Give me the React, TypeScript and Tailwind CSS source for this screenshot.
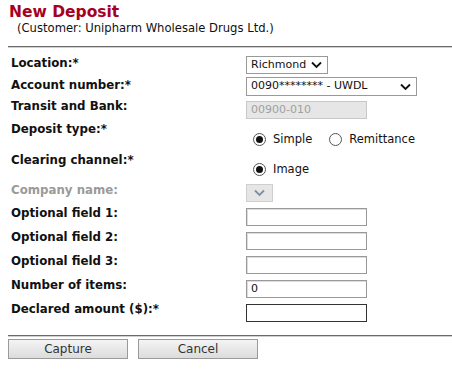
import React from 'react';

const Chevron = ({ color = '#111' }: { color?: string }) => (
  <svg width="11" height="8" viewBox="0 0 11 8" className="shrink-0">
    <path d="M1 1.5 L5.5 6 L10 1.5" fill="none" stroke={color} strokeWidth="1.8" />
  </svg>
);

const Radio = ({ checked }: { checked?: boolean }) => (
  <span className="w-[13px] h-[13px] rounded-full border border-[#555] bg-white flex items-center justify-center shrink-0">
    {checked && <span className="w-[7px] h-[7px] rounded-full bg-[#111]" />}
  </span>
);

const TextBox = ({ value = '', dark }: { value?: string; dark?: boolean }) => (
  <div
    className={`w-[121px] h-[18px] bg-white border flex items-center pl-[4px] text-[11px] text-[#111] ${
      dark ? 'border-[#333]' : 'border-[#999] shadow-[inset_1px_1px_0_#ddd]'
    }`}
  >
    {value}
  </div>
);

const Row = ({
  label,
  h,
  lt,
  ct,
  grey,
  children,
}: {
  label: string;
  h: number;
  lt: string;
  ct: string;
  grey?: boolean;
  children: React.ReactNode;
}) => (
  <div className="flex items-start" style={{ height: h }}>
    <div
      className={`w-[238px] pl-[3px] text-[11.8px] font-bold leading-[14px] ${lt} ${
        grey ? 'text-[#9a9a9a]' : 'text-[#111]'
      }`}
    >
      {label}
    </div>
    <div className={ct}>{children}</div>
  </div>
);

const Rule = () => (
  <div className="ml-[8px] h-[2px] border-t border-t-[#6b6b6b] border-b border-b-[#d0d0d0]" />
);

const Button = ({ children }: { children: React.ReactNode }) => (
  <button className="w-[120px] h-[20px] border border-[#9a9a9a] bg-gradient-to-b from-[#f4f4f4] to-[#dcdcdc] text-[12px] text-[#333] leading-none">
    {children}
  </button>
);

export default function App() {
  return (
    <div
      className="w-[452px] h-[370px] bg-white overflow-hidden"
      style={{ fontFamily: '"DejaVu Sans", Verdana, sans-serif' }}
    >
      <div className="pl-[9px] pt-[2px]">
        <div className="text-[15.5px] font-bold text-[#a8001f] leading-[20px]">New Deposit</div>
        <div className="pl-[8px] text-[11.6px] text-[#111] leading-[13px]">
          (Customer: Unipharm Wholesale Drugs Ltd.)
        </div>
      </div>

      <div className="mt-[11px]">
        <Rule />
      </div>

      <div className="mt-[6px] pl-[8px]">
        <Row label="Location:*" h={22} lt="pt-[2px]" ct="mt-[2px]">
          <div className="w-[82px] h-[18px] border border-[#999] bg-white flex items-center justify-between pl-[4px] pr-[5px] text-[11px] text-[#111]">
            <span>Richmond</span>
            <Chevron />
          </div>
        </Row>
        <Row label="Account number:*" h={23} lt="pt-[2px]" ct="mt-[1px]">
          <div className="w-[171px] h-[19px] border border-[#999] bg-white flex items-center justify-between pl-[4px] pr-[5px] text-[11px] text-[#111]">
            <span>0090******** - UWDL</span>
            <Chevron />
          </div>
        </Row>
        <Row label="Transit and Bank:" h={22} lt="pt-0" ct="mt-[2px]">
          <div className="w-[121px] h-[18px] border border-[#c8c8c8] bg-[#e6e6e6] flex items-center pl-[4px] text-[11px] text-[#a0a0a0]">
            00900-010
          </div>
        </Row>
        <Row label="Deposit type:*" h={30} lt="pt-[1px]" ct="mt-[11px]">
          <div className="flex items-center text-[11.5px] text-[#111] leading-[14px] pl-[7px]">
            <Radio checked />
            <span className="ml-[7px]">Simple</span>
            <span className="ml-[17px]">
              <Radio />
            </span>
            <span className="ml-[7px]">Remittance</span>
          </div>
        </Row>
        <Row label="Clearing channel:*" h={31} lt="pt-[2px]" ct="mt-[11px]">
          <div className="flex items-center text-[11.5px] text-[#111] leading-[14px] pl-[7px]">
            <Radio checked />
            <span className="ml-[7px]">Image</span>
          </div>
        </Row>
        <Row label="Company name:" grey h={24} lt="pt-[1px]" ct="mt-[2px]">
          <div className="w-[27px] h-[18px] border border-[#cfcfcf] bg-[#e6e6e6] flex items-center justify-center">
            <Chevron color="#7d8fa3" />
          </div>
        </Row>
        <Row label="Optional field 1:" h={24} lt="pt-0" ct="mt-[2px]">
          <TextBox />
        </Row>
        <Row label="Optional field 2:" h={24} lt="pt-0" ct="mt-[2px]">
          <TextBox />
        </Row>
        <Row label="Optional field 3:" h={24} lt="pt-0" ct="mt-[2px]">
          <TextBox />
        </Row>
        <Row label="Number of items:" h={24} lt="pt-0" ct="mt-[2px]">
          <TextBox value="0" />
        </Row>
        <Row label="Declared amount ($):*" h={24} lt="pt-0" ct="mt-[2px]">
          <TextBox dark />
        </Row>
      </div>

      <div className="mt-[9px]">
        <Rule />
      </div>

      <div className="mt-[2px] pl-[8px] flex gap-[10px]">
        <Button>Capture</Button>
        <Button>Cancel</Button>
      </div>
    </div>
  );
}
